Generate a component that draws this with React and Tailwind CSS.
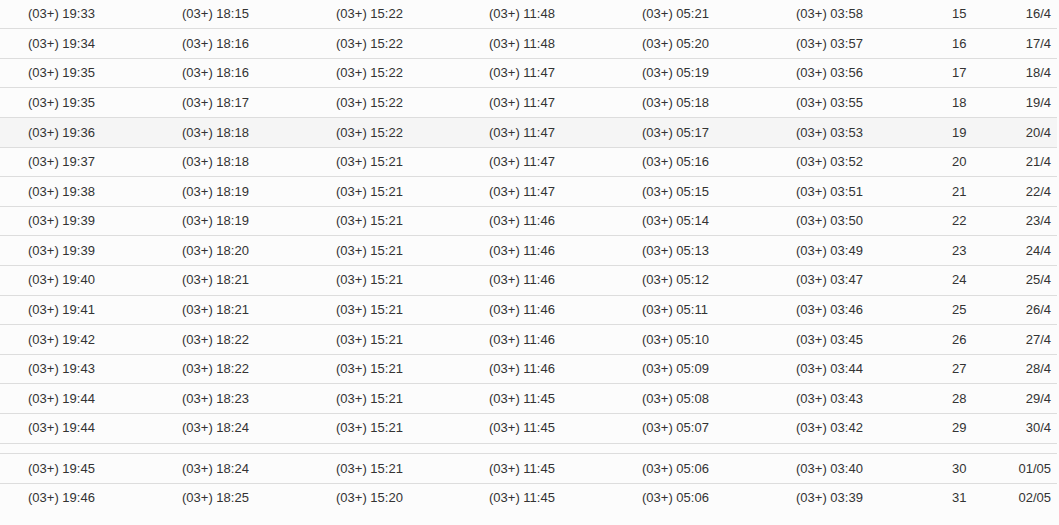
const rows = [
  ['19:33', '18:15', '15:22', '11:48', '05:21', '03:58', '15', '16/4'],
  ['19:34', '18:16', '15:22', '11:48', '05:20', '03:57', '16', '17/4'],
  ['19:35', '18:16', '15:22', '11:47', '05:19', '03:56', '17', '18/4'],
  ['19:35', '18:17', '15:22', '11:47', '05:18', '03:55', '18', '19/4'],
  ['19:36', '18:18', '15:22', '11:47', '05:17', '03:53', '19', '20/4', true],
  ['19:37', '18:18', '15:21', '11:47', '05:16', '03:52', '20', '21/4'],
  ['19:38', '18:19', '15:21', '11:47', '05:15', '03:51', '21', '22/4'],
  ['19:39', '18:19', '15:21', '11:46', '05:14', '03:50', '22', '23/4'],
  ['19:39', '18:20', '15:21', '11:46', '05:13', '03:49', '23', '24/4'],
  ['19:40', '18:21', '15:21', '11:46', '05:12', '03:47', '24', '25/4'],
  ['19:41', '18:21', '15:21', '11:46', '05:11', '03:46', '25', '26/4'],
  ['19:42', '18:22', '15:21', '11:46', '05:10', '03:45', '26', '27/4'],
  ['19:43', '18:22', '15:21', '11:46', '05:09', '03:44', '27', '28/4'],
  ['19:44', '18:23', '15:21', '11:45', '05:08', '03:43', '28', '29/4'],
  ['19:44', '18:24', '15:21', '11:45', '05:07', '03:42', '29', '30/4'],
  null,
  ['19:45', '18:24', '15:21', '11:45', '05:06', '03:40', '30', '01/05'],
  ['19:46', '18:25', '15:20', '11:45', '05:06', '03:39', '31', '02/05'],
];

function Row({ r }) {
  const times = r.slice(0, 6);
  return (
    <div
      className={`grid grid-cols-[154px_154px_153px_153px_154px_156px_1fr_auto] items-center h-[29.6px] pl-[28px] pr-[6px] pt-[1px] border-t border-[#dddddd] ${
        r[8] ? 'bg-[#f5f5f5]' : ''
      }`}
    >
      {times.map((t, i) => (
        <div key={i}>(03+) {t}</div>
      ))}
      <div>{r[6]}</div>
      <div className="text-right">{r[7]}</div>
    </div>
  );
}

export default function App() {
  return (
    <div className="min-h-screen bg-[#fcfcfc] overflow-hidden">
      <div
        className="w-[1057px] -mt-[1.4px] text-[13px] leading-[18.57px] text-[#333333]"
        style={{ fontFamily: '"Liberation Sans", Arial, sans-serif' }}
      >
        {rows.map((r, i) =>
          r ? (
            <Row key={i} r={r} />
          ) : (
            <div key={i} className="h-[10.6px] border-t border-[#dddddd]" />
          )
        )}
      </div>
    </div>
  );
}
